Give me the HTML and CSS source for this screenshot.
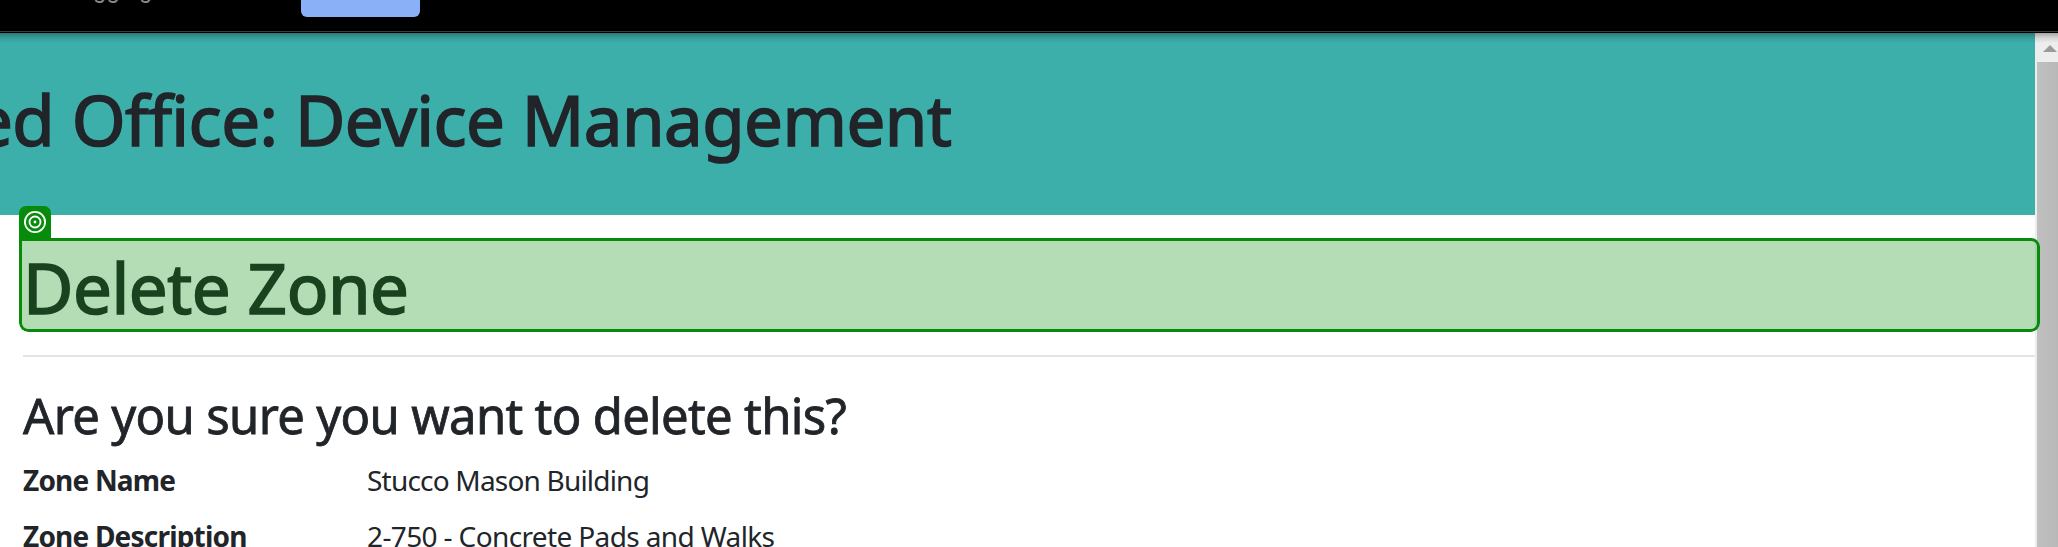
FILE: index.html
```html
<!DOCTYPE html>
<html lang="en">
<head>
<meta charset="utf-8">
<title>Delete Zone</title>
<link rel="stylesheet" href="styles.css">
</head>
<body>
<div class="infobar">
  <span class="infobar-text">gging</span>
  <span class="infobar-button"></span>
</div>
<div class="viewport">
  <main class="page">
    <header class="banner"><span class="banner-title"><span class="banner-lead">ed</span> Office: Device Management</span></header>
    <section class="content">
      <div class="heading">
        <h1 class="heading-text">Delete Zone</h1>
        <div class="highlight"></div>
        <div class="badge">
          <svg width="24" height="24" viewBox="0 0 24 24" fill="none" stroke="#fff" stroke-width="1.8">
            <circle cx="12" cy="12" r="10.1"/>
            <circle cx="12" cy="12" r="5.5"/>
            <circle cx="12" cy="12" r="1.4" fill="#fff" stroke="none"/>
          </svg>
        </div>
      </div>
      <hr class="rule">
      <h3 class="question">Are you sure you want to delete this?</h3>
      <dl class="details">
        <dt class="term">Zone Name</dt><dd class="value">Stucco Mason Building</dd>
        <dt class="term">Zone Description</dt><dd class="value value-wide">2-750 - Concrete Pads and Walks</dd>
      </dl>
    </section>
  </main>
  <div class="scrollbar">
    <svg class="arrow" width="14" height="7" viewBox="0 0 14 7"><path d="M0 7L7 0l7 7z" fill="#9b9b9b"/></svg>
    <div class="thumb"></div>
  </div>
  <div class="top-shade"></div>
</div>
</body>
</html>
```

FILE: styles.css
```css
* { box-sizing: border-box; }
body {
  margin: 0;
  width: 2058px;
  height: 547px;
  overflow: hidden;
  background: #fff;
  color: #212529;
  font-family: "Noto Sans", "Open Sans", sans-serif;
}
.infobar {
  display: flex;
  align-items: flex-start;
  height: 33px;
  padding-left: 93px;
  background: linear-gradient(#000 31px, #3c3c3c 31px, #3c3c3c 32px, #000 32px);
}
.infobar-text {
  width: 208px;
  margin-top: -24px;
  font: 24px/28px Roboto, sans-serif;
  color: #85898d;
}
.infobar-button {
  width: 119px;
  height: 17px;
  background: #8ab0f7;
  border-radius: 0 0 6px 6px;
}
.viewport {
  position: relative;
  display: flex;
  height: 514px;
}
.page { width: 2035px; }
.banner {
  display: flex;
  align-items: center;
  height: 182px;
  background: #3cafab;
}
.banner-title {
  margin: -11px 0 0 -26px;
  font-size: 69px;
  line-height: 84px;
  letter-spacing: -.55px;
  -webkit-text-stroke: 1.6px;
  white-space: nowrap;
}
.content { padding: 22px 0 0 23px; }
.heading {
  position: relative;
  height: 94px;
}
.heading-text {
  margin: 0;
  padding-top: 8px;
  font-size: 69px;
  line-height: 84px;
  font-weight: 400;
  letter-spacing: -.45px;
  -webkit-text-stroke: 1.6px;
  white-space: nowrap;
}
.highlight {
  position: absolute;
  left: -4px;
  top: 0;
  width: 2021px;
  height: 95px;
  border: 3px solid #078b0b;
  border-top-width: 4px;
  border-radius: 0 9px 9px 9px;
  background: rgba(7, 139, 11, .3);
  clip-path: inset(1px 0 0 0 round 0 9px 9px 9px);
  z-index: 2;
}
.badge {
  position: absolute;
  left: -4px;
  top: -31px;
  display: flex;
  align-items: center;
  justify-content: center;
  width: 32px;
  height: 32px;
  background: #078b0b;
  border-radius: 7px 7px 0 0;
  z-index: 3;
}
.rule {
  height: 2px;
  margin: 24px 0 28px;
  border: 0;
  background: #e4e4e4;
}
.question {
  margin: 0;
  font-size: 49px;
  line-height: 60px;
  font-weight: 400;
  letter-spacing: -.67px;
  -webkit-text-stroke: .8px;
  white-space: nowrap;
}
.details {
  display: grid;
  grid-template-columns: 344px 1fr;
  grid-auto-rows: 56px;
  margin: 0;
  padding-top: 14px;
  font-size: 28px;
  line-height: 42px;
  letter-spacing: -.8px;
  white-space: nowrap;
}
.term { font-weight: 700; }
.value { margin: 0; }
.value-wide { letter-spacing: -.63px; }
.scrollbar {
  display: flex;
  flex-direction: column;
  width: 23px;
  padding-left: 2px;
  background: #ededed;
}
.arrow { margin: 12px 0 10px 6px; flex: none; }
.thumb { flex: 1; background: linear-gradient(90deg, #c0c0c0, #b8b8b8); }
.top-shade {
  position: absolute;
  inset: 0 0 auto;
  height: 10px;
  background: linear-gradient(rgba(0, 0, 0, .3), rgba(0, 0, 0, .1) 50%, transparent);
}
```
